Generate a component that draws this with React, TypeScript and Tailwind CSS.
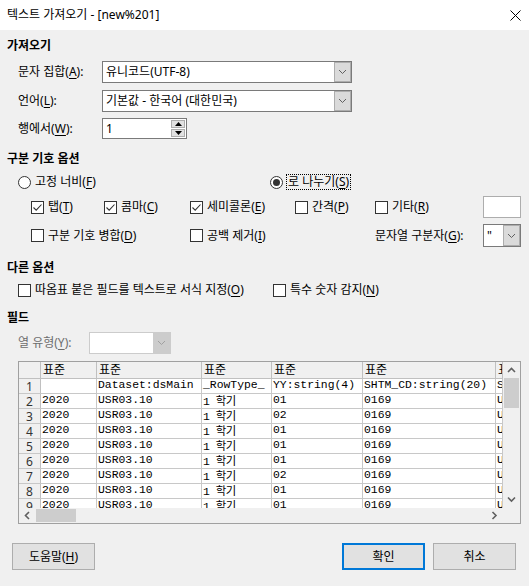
import React from 'react'

const U = ({ children }: { children: React.ReactNode }) => (
  <span className="underline underline-offset-[2px]">{children}</span>
)

function Section({ children, className = '' }: { children: React.ReactNode; className?: string }) {
  return <div className={`h-[16px] flex items-center font-bold ${className}`}>{children}</div>
}

function Check({ checked = false }: { checked?: boolean }) {
  return (
    <svg width="13" height="13" viewBox="0 0 13 13" className="shrink-0">
      <rect x="0.5" y="0.5" width="12" height="12" fill="#fff" stroke="#333" />
      {checked && <path d="M2.5 6.5 L5.2 9.2 L10.5 3.5" fill="none" stroke="#333" strokeWidth="1.1" />}
    </svg>
  )
}

function Radio({ checked = false }: { checked?: boolean }) {
  return (
    <svg width="13" height="13" viewBox="0 0 13 13" className="shrink-0">
      <circle cx="6.5" cy="6.5" r="6" fill="#fff" stroke="#333" />
      {checked && <circle cx="6.5" cy="6.5" r="3.5" fill="#333" />}
    </svg>
  )
}

function Chevron({ color = '#606060' }: { color?: string }) {
  return (
    <svg width="9" height="6" viewBox="0 0 9 6">
      <path d="M1 1 L4.5 4.5 L8 1" fill="none" stroke={color} strokeWidth="1" />
    </svg>
  )
}

function Combo({ text, width, disabled = false }: { text?: string; width: string; disabled?: boolean }) {
  return (
    <div className={`${width} h-full flex bg-white border ${disabled ? 'border-[#cccccc]' : 'border-[#7a7a7a]'}`}>
      <div className="flex-1 flex items-center pl-[3px] overflow-hidden whitespace-nowrap">{text}</div>
      <div
        className={`w-[17px] flex items-center justify-center border ${
          disabled ? 'bg-[#cccccc] border-[#cccccc]' : 'bg-[#dadada] border-[#adadad]'
        }`}
      >
        <Chevron color={disabled ? '#a0a0a0' : '#606060'} />
      </div>
    </div>
  )
}

const cols = ['w-[22px]', 'w-[56px]', 'w-[105px]', 'w-[70px]', 'w-[91px]', 'w-[133px]', 'flex-1']

const rows = [
  ['1', '', 'Dataset:dsMain', '_RowType_', 'YY:string(4)', 'SHTM_CD:string(20)', 'SH'],
  ['2', '2020', 'USR03.10', '1 학기', '01', '0169', 'US'],
  ['3', '2020', 'USR03.10', '1 학기', '02', '0169', 'US'],
  ['4', '2020', 'USR03.10', '1 학기', '01', '0169', 'US'],
  ['5', '2020', 'USR03.10', '1 학기', '01', '0169', 'US'],
  ['6', '2020', 'USR03.10', '1 학기', '01', '0169', 'US'],
  ['7', '2020', 'USR03.10', '1 학기', '02', '0169', 'US'],
  ['8', '2020', 'USR03.10', '1 학기', '01', '0169', 'US'],
  ['9', '2020', 'USR03.10', '1 학기', '01', '0169', 'US'],
]

function Grid() {
  return (
    <div className="flex-1 overflow-hidden bg-white">
      <div className="h-[17px] flex border-b border-[#c0c0c0] bg-[#f0f0f0]">
        {cols.map((c, i) => (
          <div key={i} className={`${c} shrink-0 border-r border-[#c0c0c0] pl-[2px] flex items-center overflow-hidden whitespace-nowrap`}>
            {i > 0 && '표준'}
          </div>
        ))}
      </div>
      {rows.map((r) => (
        <div key={r[0]} className="h-[15px] flex border-b border-[#c8c8c8]">
          {r.map((v, i) =>
            i === 0 ? (
              <div key={i} className={`${cols[i]} shrink-0 bg-[#f0f0f0] border-r border-[#c0c0c0] flex items-center justify-center pt-[2px] text-[12px] leading-[12px] text-[#333]`}>
                {v}
              </div>
            ) : (
              <div
                key={i}
                className={`${cols[i]} shrink-0 border-r border-[#c8c8c8] pl-[1px] overflow-hidden whitespace-nowrap font-['Liberation_Mono','Noto_Sans_CJK_KR',monospace] text-[11.4px] ${
                  i === 3 && v !== '_RowType_' ? 'pt-[2px] leading-[12px] tracking-[-0.5px]' : 'leading-[13px]'
                }`}
              >
                {v}
              </div>
            )
          )}
        </div>
      ))}
    </div>
  )
}

function Arrow({ dir }: { dir: 'up' | 'down' | 'left' | 'right' }) {
  const d = {
    up: 'M1 5 L4.5 1.5 L8 5',
    down: 'M1 1.5 L4.5 5 L8 1.5',
    left: 'M5 1 L1.5 4.5 L5 8',
    right: 'M1.5 1 L5 4.5 L1.5 8',
  }[dir]
  const vertical = dir === 'up' || dir === 'down'
  return (
    <svg width={vertical ? 9 : 7} height={vertical ? 7 : 9} viewBox={vertical ? '0 0 9 7' : '0 0 7 9'}>
      <path d={d} fill="none" stroke="#606060" strokeWidth="1.6" />
    </svg>
  )
}

function Btn({ children, focused = false, className = '' }: { children: React.ReactNode; focused?: boolean; className?: string }) {
  return (
    <div
      className={`w-[83px] h-[27px] flex items-center justify-center bg-[#e1e1e1] ${
        focused ? 'border-2 border-[#0078d7]' : 'border border-[#adadad]'
      } ${className}`}
    >
      {children}
    </div>
  )
}

export default function App() {
  return (
    <div className="w-[529px] h-[586px] bg-[#f0f0f0] text-[12px] leading-none text-black font-['Noto_Sans','Noto_Sans_CJK_KR',sans-serif] overflow-hidden flex flex-col">
      <div className="h-[30px] shrink-0 bg-white flex items-center justify-between pl-[7px] pr-[8px]">
        <span>텍스트 가져오기 - [new%201]</span>
        <svg width="11" height="11" viewBox="0 0 11 11">
          <path d="M0.5 0.5 L10.5 10.5 M10.5 0.5 L0.5 10.5" stroke="#000" strokeWidth="1" />
        </svg>
      </div>

      <div className="flex flex-col px-[7px]">
        <Section className="mt-[8px]">가져오기</Section>
        <div className="mt-[7px] h-[22px] flex items-center pl-[11px]">
          <span className="w-[84px]">
            문자 집합(<U>A</U>):
          </span>
          <Combo width="w-[250px]" text="유니코드(UTF-8)" />
        </div>
        <div className="mt-[7px] h-[22px] flex items-center pl-[11px]">
          <span className="w-[84px]">
            언어(<U>L</U>):
          </span>
          <Combo width="w-[250px]" text="기본값 - 한국어 (대한민국)" />
        </div>
        <div className="mt-[6px] h-[21px] flex items-center pl-[11px]">
          <span className="w-[84px]">
            행에서(<U>W</U>):
          </span>
          <div className="w-[85px] h-full flex bg-white border border-[#7a7a7a]">
            <div className="flex-1 flex items-center pl-[3px]">1</div>
            <div className="w-[16px] flex flex-col p-[1px] gap-[1px]">
              <div className="flex-1 bg-[#e1e1e1] border border-[#adadad] flex items-center justify-center">
                <svg width="7" height="4" viewBox="0 0 7 4"><path d="M0 4 L3.5 0 L7 4Z" fill="#000" /></svg>
              </div>
              <div className="flex-1 bg-[#e1e1e1] border border-[#adadad] flex items-center justify-center">
                <svg width="7" height="4" viewBox="0 0 7 4"><path d="M0 0 L3.5 4 L7 0Z" fill="#000" /></svg>
              </div>
            </div>
          </div>
        </div>

        <Section className="mt-[12px]">구분 기호 옵션</Section>
        <div className="mt-[7px] h-[16px] flex items-center pl-[11px]">
          <div className="w-[252px] flex items-center gap-[4px]">
            <Radio />
            <span>
              고정 너비(<U>F</U>)
            </span>
          </div>
          <div className="flex items-center gap-[3px]">
            <Radio checked />
            <span className="border border-dotted border-black px-[1px] py-[1px]">
              로 나누기(<U>S</U>)
            </span>
          </div>
        </div>
        <div className="mt-[6px] h-[22px] flex items-center pl-[24px]">
          <div className="w-[73px] flex items-center gap-[4px]">
            <Check checked />
            <span>
              탭(<U>T</U>)
            </span>
          </div>
          <div className="w-[86px] flex items-center gap-[4px]">
            <Check checked />
            <span>
              콤마(<U>C</U>)
            </span>
          </div>
          <div className="w-[105px] flex items-center gap-[4px]">
            <Check checked />
            <span>
              세미콜론(<U>E</U>)
            </span>
          </div>
          <div className="w-[80px] flex items-center gap-[4px]">
            <Check />
            <span>
              간격(<U>P</U>)
            </span>
          </div>
          <div className="flex-1 flex items-center gap-[4px]">
            <Check />
            <span>
              기타(<U>R</U>)
            </span>
          </div>
          <div className="w-[38px] h-full mr-[1px] bg-white border border-[#adadad]" />
        </div>
        <div className="mt-[6px] h-[23px] flex items-center pl-[24px]">
          <div className="w-[159px] flex items-center gap-[4px]">
            <Check />
            <span>
              구분 기호 병합(<U>D</U>)
            </span>
          </div>
          <div className="w-[185px] flex items-center gap-[4px]">
            <Check />
            <span>
              공백 제거(<U>I</U>)
            </span>
          </div>
          <div className="flex-1">
            문자열 구분자(<U>G</U>):
          </div>
          <div className="h-full mr-[1px] flex">
            <Combo width="w-[38px]" text={'"'} />
          </div>
        </div>

        <Section className="mt-[13px]">다른 옵션</Section>
        <div className="mt-[6px] h-[16px] flex items-center pl-[11px]">
          <div className="w-[255px] flex items-center gap-[4px]">
            <Check />
            <span>
              따옴표 붙은 필드를 텍스트로 서식 지정(<U>O</U>)
            </span>
          </div>
          <div className="flex items-center gap-[4px]">
            <Check />
            <span>
              특수 숫자 감지(<U>N</U>)
            </span>
          </div>
        </div>

        <Section className="mt-[12px]">필드</Section>
        <div className="mt-[6px] h-[22px] flex items-center pl-[11px]">
          <span className="w-[71px] text-[#6d6d6d]">
            열 유형(<U>Y</U>):
          </span>
          <Combo width="w-[82px]" disabled />
        </div>

        <div className="mt-[7px] ml-[11px] w-[503px] h-[163px] border border-[#a0a0a0] flex flex-col">
          <div className="h-[146px] flex">
            <Grid />
            <div className="w-[17px] flex flex-col bg-[#f0f0f0]">
              <div className="h-[16px] flex items-center justify-center">
                <Arrow dir="up" />
              </div>
              <div className="mx-[1px] h-[30px] bg-[#cdcdcd]" />
              <div className="flex-1" />
              <div className="h-[17px] flex items-center justify-center">
                <Arrow dir="down" />
              </div>
            </div>
          </div>
          <div className="flex-1 flex bg-[#f0f0f0]">
            <div className="w-[17px] flex items-center justify-center">
              <Arrow dir="left" />
            </div>
            <div className="w-[40px] my-[1px] bg-[#cdcdcd]" />
            <div className="flex-1" />
            <div className="w-[17px] flex items-center justify-center">
              <Arrow dir="right" />
            </div>
            <div className="w-[17px]" />
          </div>
        </div>

        <div className="mt-[19px] flex items-center pl-[5px] pr-[6px]">
          <Btn>
            도움말(<U>H</U>)
          </Btn>
          <div className="flex-1" />
          <Btn focused>확인</Btn>
          <Btn className="ml-[8px]">취소</Btn>
        </div>
      </div>
    </div>
  )
}
